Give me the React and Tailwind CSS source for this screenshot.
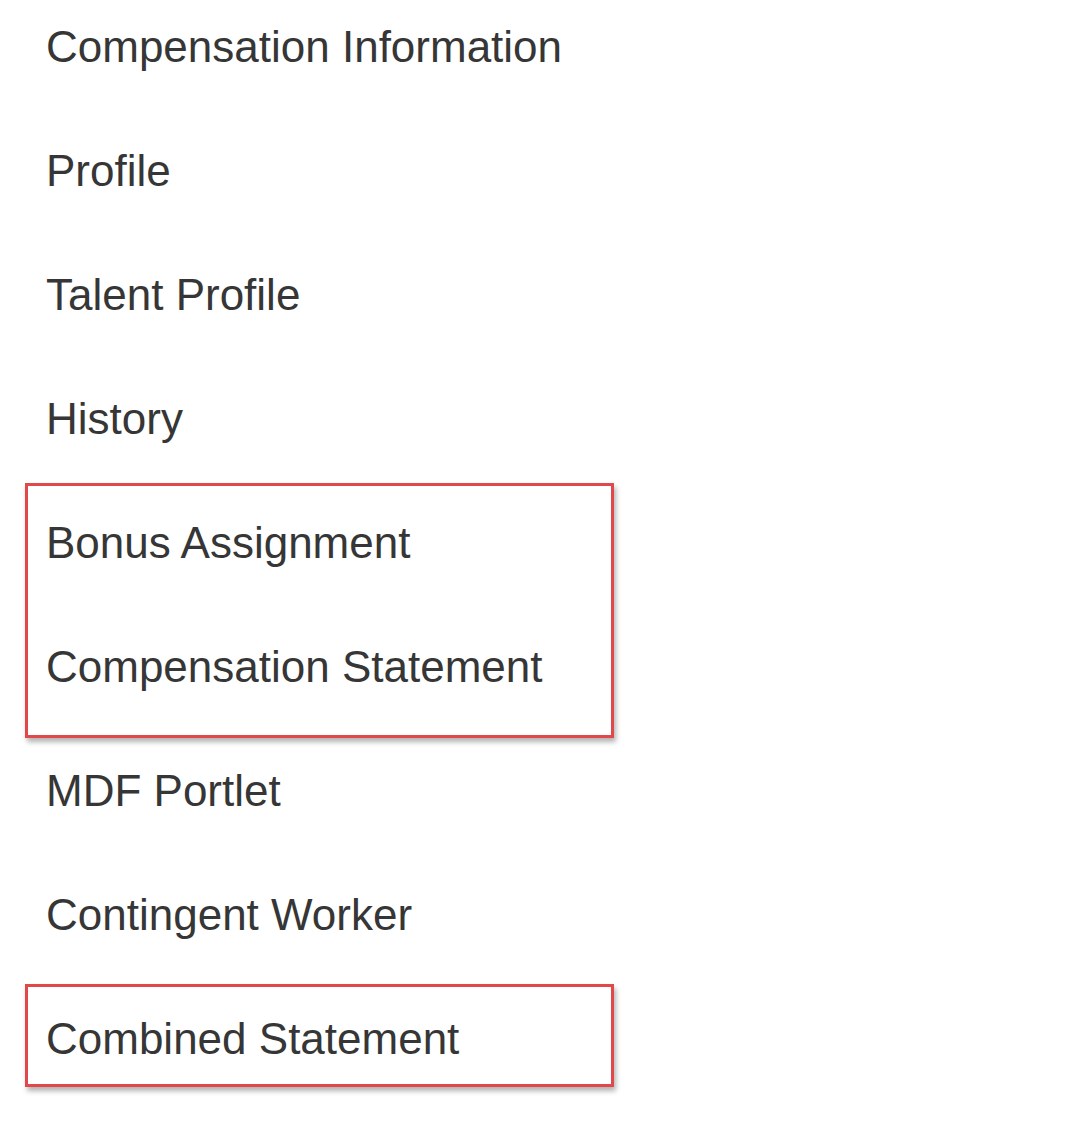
import React from 'react';

const items = [
  'Compensation Information',
  'Profile',
  'Talent Profile',
  'History',
  'Bonus Assignment',
  'Compensation Statement',
  'MDF Portlet',
  'Contingent Worker',
  'Combined Statement',
];

// red annotation frames drawn over the list
const frames = [
  { top: 483, height: 255 },
  { top: 984, height: 103 },
];

function Row({ label }) {
  return (
    <div className="h-[124px] flex items-center pl-[46px]">
      <span className="text-[44px] leading-none text-[#363636]">{label}</span>
    </div>
  );
}

export default function App() {
  return (
    <div
      className="relative w-[1080px] h-[1123px] bg-white overflow-hidden"
      style={{ fontFamily: '"Liberation Sans", Arial, sans-serif' }}
    >
      <div className="mt-[-15px]">
        {items.map((label) => (
          <Row key={label} label={label} />
        ))}
      </div>
      {frames.map((f) => (
        <div
          key={f.top}
          className="absolute left-[25px] w-[589px] border-[3px] border-[#e0484a] shadow-[2px_4px_5px_rgba(0,0,0,0.3)]"
          style={{ top: f.top, height: f.height }}
        />
      ))}
    </div>
  );
}
